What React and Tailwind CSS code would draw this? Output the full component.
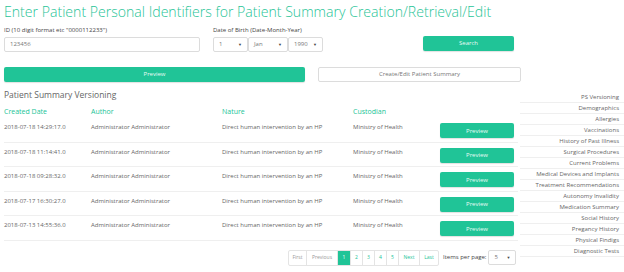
const ROWS = [
  '2018-07-18 14:29:17.0',
  '2018-07-18 11:14:41.0',
  '2018-07-18 09:28:32.0',
  '2018-07-17 16:30:27.0',
  '2018-07-13 14:55:36.0',
];

const SECTIONS = [
  'PS Versioning',
  'Demographics',
  'Allergies',
  'Vaccinations',
  'History of Past Illness',
  'Surgical Procedures',
  'Current Problems',
  'Medical Devices and Implants',
  'Treatment Recommendations',
  'Autonomy Invalidity',
  'Medication Summary',
  'Social History',
  'Pregancy History',
  'Physical Findigs',
  'Diagnostic Tests',
];

const PAGES = [
  { label: 'First', w: 'w-[18px]', muted: true },
  { label: 'Previous', w: 'w-[31px]', muted: true },
  { label: '1', w: 'w-[13px]', active: true },
  { label: '2', w: 'w-[12px]' },
  { label: '3', w: 'w-[12px]' },
  { label: '4', w: 'w-[12px]' },
  { label: '5', w: 'w-[12px]' },
  { label: 'Next', w: 'w-[21px]' },
  { label: 'Last', w: 'w-[18px]' },
];

const Select = ({ value, className }) => (
  <div
    className={`flex h-[15px] items-center justify-between rounded-[2px] border border-[#dcdcdc] bg-white px-[5px] text-[6px] text-[#777] ${className}`}
  >
    <span>{value}</span>
    <span className="text-[4px] text-[#444]">▼</span>
  </div>
);

const teal = 'bg-[#20c497] text-[#e8fbf5] shadow-[0_1px_1px_rgba(0,0,0,0.12)]';

export default function App() {
  return (
    <div
      className="h-[272px] w-[624px] overflow-hidden bg-white text-[#666]"
      style={{ fontFamily: '"Open Sans", sans-serif' }}
    >
      <div className="px-[4px] pt-[2px]">
        <h1 className="text-[14.1px] font-light leading-[20px] text-[#1fc497]">
          Enter Patient Personal Identifiers for Patient Summary Creation/Retrieval/Edit
        </h1>

        <div className="mt-[4px] flex items-end">
          <div className="w-[196px]">
            <p className="text-[6px] leading-[8px] text-[#444]">ID (10 digit format etc "0000112233")</p>
            <div className="mt-[3px] flex h-[15px] items-center rounded-[2px] border border-[#dcdcdc] px-[5px] text-[6px] text-[#777]">
              123456
            </div>
          </div>
          <div className="ml-[13px]">
            <p className="text-[6px] leading-[8px] text-[#444]">Date of Birth (Date-Month-Year)</p>
            <div className="mt-[3px] flex">
              <Select value="1" className="w-[35px]" />
              <Select value="Jan" className="w-[40px]" />
              <Select value="1990" className="w-[35px]" />
            </div>
          </div>
          <button className={`mb-[1px] ml-[100px] h-[15px] w-[91px] rounded-[2px] text-[6px] ${teal}`}>
            Search
          </button>
        </div>

        <div className="mt-[15px] flex">
          <button className={`h-[15px] w-[301px] rounded-[2px] text-[6px] ${teal}`}>Preview</button>
          <button className="ml-[13px] h-[15px] w-[203px] rounded-[2px] border border-[#dcdcdc] bg-white text-[6px] text-[#777]">
            Create/Edit Patient Summary
          </button>
        </div>
      </div>

      <div className="mt-[7px] flex">
        <div className="w-[520px] pl-[4px]">
          <h2 className="text-[8.5px] leading-[12px] text-[#666]">Patient Summary Versioning</h2>

          <div className="mt-[6px] flex h-[11px] items-center text-[7px] text-[#20c497]">
            <span className="w-[87px]">Created Date</span>
            <span className="w-[131px]">Author</span>
            <span className="w-[131px]">Nature</span>
            <span>Custodian</span>
          </div>

          <div className="mr-[2px]">
            {ROWS.map((date) => (
              <div
                key={date}
                className="flex h-[24.5px] items-start border-b border-[#efefef] text-[6px] leading-[8px] text-[#666]"
              >
                <span className="w-[87px] pt-[5px]">{date}</span>
                <span className="w-[131px] pt-[5px]">Administrator Administrator</span>
                <span className="w-[131px] pt-[5px]">Direct human intervention by an HP</span>
                <span className="w-[87px] pt-[5px]">Ministry of Health</span>
                <button className={`mt-[5px] h-[15px] w-[74px] rounded-[2px] text-[6px] ${teal}`}>Preview</button>
              </div>
            ))}
          </div>

          <div className="mt-[9px] flex items-center pl-[284px]">
            <div className="flex rounded-[2px] border border-[#e4e4e4] text-[5px]">
              {PAGES.map((p) => (
                <span
                  key={p.label}
                  className={`flex h-[14px] items-center justify-center border-r border-[#e4e4e4] last:border-r-0 ${p.w} ${
                    p.active ? 'bg-[#20c497] text-white' : p.muted ? 'text-[#999]' : 'text-[#20c497]'
                  }`}
                >
                  {p.label}
                </span>
              ))}
            </div>
            <span className="ml-[4px] whitespace-nowrap text-[6px] text-[#444]">Items per page:</span>
            <Select value="5" className="ml-[2px] w-[28px]" />
          </div>
        </div>

        <div className="w-[104px] pt-[3px]">
          {SECTIONS.map((s) => (
            <div
              key={s}
              className="flex h-[11px] items-center justify-end border-b border-[#efefef] pr-[5px] text-[6px] text-[#666]"
            >
              {s}
            </div>
          ))}
        </div>
      </div>
    </div>
  );
}
